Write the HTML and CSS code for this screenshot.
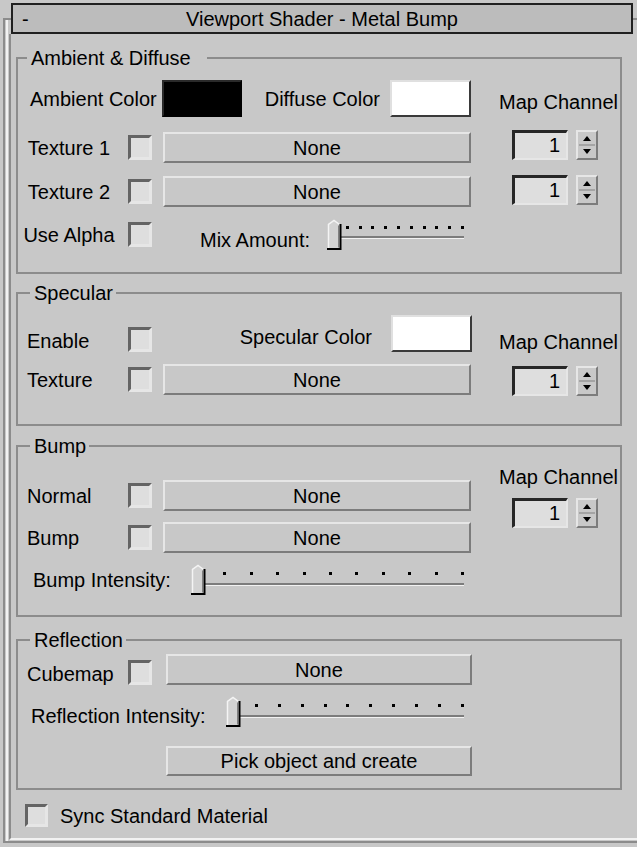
FILE: index.html
```html
<!DOCTYPE html>
<html lang="en">
<head>
    <meta charset="UTF-8">
    <meta name="viewport" content="width=device-width, initial-scale=1.0">
    <title>Viewport Shader - Metal Bump</title>
    <link rel="stylesheet" href="styles.css">
</head>
<body>
    <div class="rollout">
        <div class="rollout-title">
            <span class="toggle">-</span>
            <span class="title">Viewport Shader - Metal Bump</span>
            <span></span>
        </div>
        <div class="rollout-body">

            <fieldset class="group ambient">
                <legend>Ambient &amp; Diffuse</legend>
                <div class="group-body">
                    <div class="main">
                        <div class="row colors">
                            <span class="color-label ambient-label">Ambient Color</span>
                            <div class="swatch black"></div>
                            <span class="color-label diffuse-label">Diffuse Color</span>
                            <div class="swatch white"></div>
                        </div>
                        <div class="row tex1">
                            <span class="label">Texture 1</span>
                            <span class="check"></span>
                            <button class="map-btn">None</button>
                        </div>
                        <div class="row tex2">
                            <span class="label">Texture 2</span>
                            <span class="check"></span>
                            <button class="map-btn">None</button>
                        </div>
                        <div class="row alpha">
                            <span class="label">Use Alpha</span>
                            <span class="check"></span>
                            <span class="slider-label">Mix Amount:</span>
                            <div class="slider mix">
                                <div class="ticks"><i></i><i></i><i></i><i></i><i></i><i></i><i></i><i></i><i></i><i></i><i></i></div>
                                <div class="track"></div>
                                <svg class="thumb" width="15" height="31" viewBox="0 0 15 31"><path d="M1 30V5L7 1L13 5V30Z" fill="#d2d2d2"/><path d="M1.5 30V5.5L7 1.5L12.5 5.5" fill="none" stroke="#f4f4f4" stroke-width="1.5"/><path d="M13.5 5V30H0" fill="none" stroke="#000" stroke-width="2"/><path d="M11.5 6.5V28.5" stroke="#808080" stroke-width="1"/></svg>
                            </div>
                        </div>
                    </div>
                    <div class="side">
                        <span class="side-label">Map Channel</span>
                        <div class="spinner first">
                            <div class="spin-field">1</div>
                            <div class="spin-arrows"><svg width="18" height="26" viewBox="0 0 18 26"><path d="M5 9H13L9 4Z" fill="#000"/><path d="M1 13H17" stroke="#808080" stroke-width="1"/><path d="M5 17H13L9 22Z" fill="#000"/></svg></div>
                        </div>
                        <div class="spinner second">
                            <div class="spin-field">1</div>
                            <div class="spin-arrows"><svg width="18" height="26" viewBox="0 0 18 26"><path d="M5 9H13L9 4Z" fill="#000"/><path d="M1 13H17" stroke="#808080" stroke-width="1"/><path d="M5 17H13L9 22Z" fill="#000"/></svg></div>
                        </div>
                    </div>
                </div>
            </fieldset>

            <fieldset class="group specular">
                <legend>Specular</legend>
                <div class="group-body">
                    <div class="main">
                        <div class="row enable">
                            <span class="label">Enable</span>
                            <span class="check"></span>
                            <span class="color-label specular-label">Specular Color</span>
                            <div class="swatch white"></div>
                        </div>
                        <div class="row texture">
                            <span class="label">Texture</span>
                            <span class="check"></span>
                            <button class="map-btn">None</button>
                        </div>
                    </div>
                    <div class="side">
                        <span class="side-label">Map Channel</span>
                        <div class="spinner">
                            <div class="spin-field">1</div>
                            <div class="spin-arrows"><svg width="18" height="26" viewBox="0 0 18 26"><path d="M5 9H13L9 4Z" fill="#000"/><path d="M1 13H17" stroke="#808080" stroke-width="1"/><path d="M5 17H13L9 22Z" fill="#000"/></svg></div>
                        </div>
                    </div>
                </div>
            </fieldset>

            <fieldset class="group bump">
                <legend>Bump</legend>
                <div class="group-body">
                    <div class="main">
                        <div class="row normal">
                            <span class="label">Normal</span>
                            <span class="check"></span>
                            <button class="map-btn">None</button>
                        </div>
                        <div class="row bumpmap">
                            <span class="label">Bump</span>
                            <span class="check"></span>
                            <button class="map-btn">None</button>
                        </div>
                        <div class="row intensity">
                            <span class="slider-label">Bump Intensity:</span>
                            <div class="slider bump-slider">
                                <div class="ticks"><i></i><i></i><i></i><i></i><i></i><i></i><i></i><i></i><i></i><i></i><i></i></div>
                                <div class="track"></div>
                                <svg class="thumb" width="15" height="31" viewBox="0 0 15 31"><path d="M1 30V5L7 1L13 5V30Z" fill="#d2d2d2"/><path d="M1.5 30V5.5L7 1.5L12.5 5.5" fill="none" stroke="#f4f4f4" stroke-width="1.5"/><path d="M13.5 5V30H0" fill="none" stroke="#000" stroke-width="2"/><path d="M11.5 6.5V28.5" stroke="#808080" stroke-width="1"/></svg>
                            </div>
                        </div>
                    </div>
                    <div class="side">
                        <span class="side-label">Map Channel</span>
                        <div class="spinner">
                            <div class="spin-field">1</div>
                            <div class="spin-arrows"><svg width="18" height="26" viewBox="0 0 18 26"><path d="M5 9H13L9 4Z" fill="#000"/><path d="M1 13H17" stroke="#808080" stroke-width="1"/><path d="M5 17H13L9 22Z" fill="#000"/></svg></div>
                        </div>
                    </div>
                </div>
            </fieldset>

            <fieldset class="group reflection">
                <legend>Reflection</legend>
                <div class="group-body">
                    <div class="main">
                        <div class="row cubemap">
                            <span class="label">Cubemap</span>
                            <span class="check"></span>
                            <button class="map-btn">None</button>
                        </div>
                        <div class="row intensity">
                            <span class="slider-label">Reflection Intensity:</span>
                            <div class="slider refl-slider">
                                <div class="ticks"><i></i><i></i><i></i><i></i><i></i><i></i><i></i><i></i><i></i><i></i><i></i></div>
                                <div class="track"></div>
                                <svg class="thumb" width="15" height="31" viewBox="0 0 15 31"><path d="M1 30V5L7 1L13 5V30Z" fill="#d2d2d2"/><path d="M1.5 30V5.5L7 1.5L12.5 5.5" fill="none" stroke="#f4f4f4" stroke-width="1.5"/><path d="M13.5 5V30H0" fill="none" stroke="#000" stroke-width="2"/><path d="M11.5 6.5V28.5" stroke="#808080" stroke-width="1"/></svg>
                            </div>
                        </div>
                        <div class="row pick">
                            <button class="map-btn">Pick object and create</button>
                        </div>
                    </div>
                </div>
            </fieldset>

            <div class="sync">
                <span class="check"></span>
                <span class="sync-label">Sync Standard Material</span>
            </div>

        </div>
    </div>
</body>
</html>
```

FILE: styles.css
```css
* {
    box-sizing: border-box;
}
body {
    margin: 0;
    background: #c8c8c8;
    font-family: "Liberation Sans", Arial, sans-serif;
    font-size: 20px;
    line-height: 22px;
    color: #000;
}

/* rollout frame + title bar */
.rollout {
    margin-top: 18px;
    margin-left: 3px;
    border-top: 2px solid #8c8c8c;
    border-left: 2px solid #8c8c8c;
    border-bottom: 2px solid #8c8c8c;
    box-shadow: inset 1px 0 0 #c8c8c8, inset 3px 0 0 #f2f2f2;
}
.rollout-title {
    display: grid;
    grid-template-columns: 1fr auto 1fr;
    align-items: center;
    height: 31px;
    margin: -17px 4px 0 6px;
    background: #bcbcbc;
    border: 2px solid #202020;
}
.toggle {
    padding-left: 9px;
}
.rollout-body {
    margin-left: 4px;
    margin-bottom: 1px;
    border-left: 2px solid #8c8c8c;
    border-bottom: 2px solid #f2f2f2;
    padding-top: 13px;
    padding-bottom: 11px;
}

/* group boxes */
.group {
    margin: 0 15px 0 5px;
    padding: 0;
    border: 2px solid #8c8c8c;
    min-inline-size: 0;
}
.group legend {
    padding: 0 3px 0 4px;
    margin-left: 12px;
    line-height: 22px;
}
.ambient legend {
    margin-left: 9px;
    padding-right: 16px;
}
.specular {
    margin-top: 8px;
}
.bump {
    margin-top: 9px;
}
.reflection {
    margin-top: 12px;
}
.group-body {
    display: flex;
}
.main {
    width: 454px;
}
.side {
    width: 123px;
    margin-left: auto;
    display: flex;
    flex-direction: column;
    align-items: center;
}

.ambient .group-body { padding-bottom: 22px; }
.specular .group-body { padding-bottom: 28px; }
.bump .group-body { padding-bottom: 20px; }
.reflection .group-body { padding-bottom: 12px; }

/* rows */
.row {
    display: flex;
    align-items: center;
}
.colors { margin-top: 11px; }
.tex1 { margin-top: 15px; }
.tex2 { margin-top: 13px; }
.alpha { margin-top: 12px; }
.enable { margin-top: 11px; align-items: flex-end; }
.specular .texture { margin-top: 12px; }
.normal { margin-top: 23px; }
.bumpmap { margin-top: 11px; }
.bump .intensity { margin-top: 11px; }
.cubemap { margin-top: 3px; align-items: flex-end; }
.reflection .intensity { margin-top: 11px; }
.pick { margin-top: 19px; }

.label {
    width: 102px;
    padding-left: 9px;
}
.ambient .label {
    padding-left: 0;
    text-align: center;
}

.color-label {
    white-space: nowrap;
}
.ambient-label { margin-left: 12px; }
.diffuse-label { margin-left: 23px; }
.specular-label {
    margin-left: auto;
    margin-bottom: 4px;
}
.swatch {
    width: 80px;
    height: 37px;
    margin-left: 5px;
    border: 2px solid;
    border-color: #e0e0e0 #3a3a3a #3a3a3a #e0e0e0;
}
.swatch.black {
    background: #000;
    border-color: #2a2a2a #000 #000 #2a2a2a;
}
.swatch.white {
    width: 81px;
    background: #fff;
    margin-left: 10px;
}
.specular .swatch.white {
    margin-left: 19px;
}

.check {
    display: block;
    flex: none;
    width: 24px;
    height: 25px;
    margin-left: 8px;
    background: #dedede;
    border: 3px solid;
    border-color: #646464 #e6e6e6 #e6e6e6 #646464;
}

.map-btn {
    width: 308px;
    height: 31px;
    margin-left: 11px;
    padding: 0;
    font: inherit;
    color: #000;
    background: #c8c8c8;
    border: 2px solid;
    border-color: #e6e6e6 #7c7c7c #7c7c7c #e6e6e6;
}
.reflection .map-btn {
    width: 307px;
    margin-left: 14px;
}
.pick .map-btn {
    margin-left: 148px;
    height: 30px;
}

/* sliders */
.slider-label {
    white-space: nowrap;
}
.alpha .slider-label {
    margin-left: 48px;
    align-self: flex-end;
    margin-bottom: -1px;
}
.bump .slider-label {
    padding-left: 15px;
}
.reflection .slider-label {
    padding-left: 13px;
    align-self: flex-end;
}
.slider {
    position: relative;
    height: 31px;
    margin-left: auto;
    margin-right: 7px;
}
.slider.mix { width: 138px; }
.slider.bump-slider { width: 274px; }
.slider.refl-slider { width: 239px; }
.ticks {
    display: flex;
    justify-content: space-between;
    padding: 0 1px 0 6px;
    margin-top: 8px;
}
.ticks i {
    width: 3px;
    height: 3px;
    background: #000;
}
.mix .ticks { margin-top: 7px; }
.track {
    margin: 8px 1px 0 7px;
    height: 3px;
    border-top: 2px solid #7c7c7c;
    border-bottom: 1px solid #f2f2f2;
}
.mix .track { margin-top: 7px; }
.thumb {
    position: absolute;
    left: 0;
    top: 0;
}

/* map channel spinners */
.side-label {
    white-space: nowrap;
}
.ambient .side-label { margin-top: 22px; }
.specular .side-label { margin-top: 27px; }
.bump .side-label { margin-top: 9px; }
.spinner {
    display: flex;
    gap: 8px;
    margin-right: 7px;
}
.ambient .spinner.first { margin-top: 17px; }
.ambient .spinner.second { margin-top: 15px; }
.specular .spinner { margin-top: 13px; }
.bump .spinner { margin-top: 10px; }
.spin-field {
    width: 56px;
    height: 30px;
    padding-right: 6px;
    text-align: right;
    line-height: 25px;
    background: #dedede;
    border: 3px solid;
    border-color: #262626 #e6e6e6 #e6e6e6 #262626;
    border-width: 3px 2px 2px 3px;
}
.spin-arrows {
    width: 22px;
    height: 30px;
    border: 2px solid;
    border-color: #e6e6e6 #7c7c7c #7c7c7c #e6e6e6;
}
.spin-arrows svg {
    display: block;
}

/* bottom checkbox */
.sync {
    display: flex;
    align-items: center;
    margin: 14px 0 0 14px;
}
.sync .check {
    width: 23px;
    height: 23px;
    margin-left: 0;
}
.sync-label {
    margin-left: 12px;
}
```
